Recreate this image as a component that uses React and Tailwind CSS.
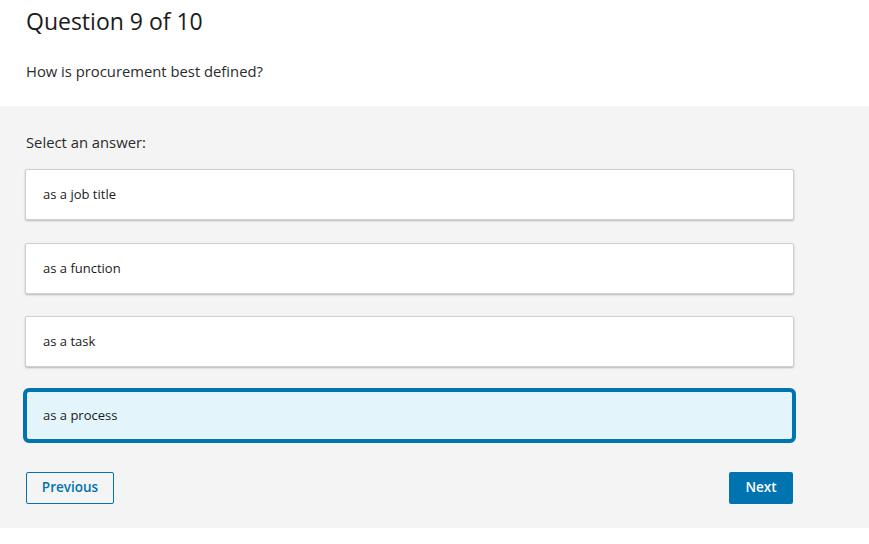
const OPTIONS = ['as a job title', 'as a function', 'as a task', 'as a process'];

export default function App() {
  const selected = 3;

  return (
    <div className="min-h-[544px] bg-white text-[#1a1a1a]" style={{ fontFamily: '"Open Sans", "Noto Sans", sans-serif' }}>
      {/* Header */}
      <div className="h-[106px] px-[26px] pt-[5px]">
        <h1 className="text-[23px] leading-[32px] font-normal text-[#1b1b1b]">Question 9 of 10</h1>
        <p className="mt-[24px] text-[14.8px] leading-[20px] text-[#2b2b2b]">How is procurement best defined?</p>
      </div>

      {/* Answers */}
      <div className="h-[422px] bg-[#f4f4f4] pl-[25px] pt-[26px]">
        <div className="w-[769px]">
          <p className="pl-[1px] text-[14.8px] leading-[20px] text-[#2b2b2b]">Select an answer:</p>
          <div className="mt-[17px] flex flex-col gap-[22.5px]">
            {OPTIONS.map((opt, i) => (
              <button
                key={opt}
                className={`h-[51px] w-full text-left pl-[17px] pt-[1px] text-[13px] rounded-[2px] border shadow-[0_1px_2px_rgba(0,0,0,0.25)] ${
                  i === selected
                    ? 'bg-[#e3f4fb] border-[#0073b1] outline-4 outline-[#0073b1] outline-offset-[-2px] rounded-[4px]'
                    : 'bg-white border-[#d0d0d0]'
                }`}
              >
                {opt}
              </button>
            ))}
          </div>
          <div className="mt-[31px] flex items-center justify-between pl-[1px] pr-[1px]">
            <button className="h-[32px] w-[88px] rounded-[2px] border border-[#0073b1] text-[13.5px] font-semibold text-[#0073b1]">
              Previous
            </button>
            <button className="h-[32px] w-[64px] rounded-[2px] bg-[#0073b1] text-[13.5px] font-semibold text-white">
              Next
            </button>
          </div>
        </div>
      </div>
    </div>
  );
}
